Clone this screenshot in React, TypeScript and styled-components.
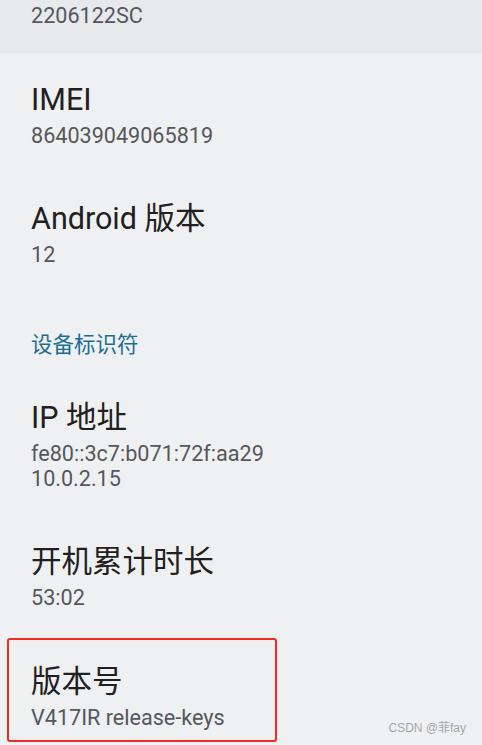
import React from 'react';
import styled, { createGlobalStyle } from 'styled-components';

const GlobalStyle = createGlobalStyle`
  html, body {
    margin: 0;
    padding: 0;
    background: #eff0f2;
  }
`;

const Screen = styled.div`
  position: relative;
  width: 482px;
  height: 745px;
  overflow: hidden;
  background: #eff0f2;
  font-family: Roboto, "Noto Sans CJK SC", sans-serif;
`;

// remainder of the previous (pressed) row, scrolled mostly out of view
const PressedTail = styled.div`
  background: #e8e9eb;
  padding: 3.2px 0 24.8px 31px;
`;

const Item = styled.div`
  position: relative;
  padding: 27px 0 24.5px 31px;
`;

const Title = styled.div`
  font-size: 30.5px;
  line-height: 40px;
  color: #1f2021;
`;

const Summary = styled.div<{ $gap?: number }>`
  margin-top: ${p => (p.$gap ?? 0)}px;
  font-size: 21.6px;
  line-height: 25px;
  color: #54585c;
`;

const SectionHeader = styled.div`
  padding: 40.2px 0 13.8px 31px;
  font-size: 21.5px;
  line-height: 25px;
  color: #1c6e94;
`;

const Highlight = styled.div`
  position: absolute;
  left: 7px;
  top: 3px;
  width: 266px;
  height: 100px;
  border: 2px solid #ee2a22;
  border-radius: 3px;
`;

const Watermark = styled.div`
  position: absolute;
  right: 16px;
  bottom: 10px;
  font-family: "Liberation Sans", "Noto Sans CJK SC", sans-serif;
  font-size: 12px;
  color: #a2a3a5;
  text-shadow: 0 0 1px #ffffff;
`;

interface RowProps {
  title: string;
  lines: string[];
  marked?: boolean;
}

const Row = ({ title, lines, marked }: RowProps) => (
  <Item>
    <Title>{title}</Title>
    {lines.map((l, i) => (
      <Summary key={i} $gap={i === 0 ? 3 : 0}>{l}</Summary>
    ))}
    {marked && <Highlight />}
  </Item>
);

const App = () => {
  return (
    <Screen>
      <GlobalStyle />
      <PressedTail>
        <Summary>2206122SC</Summary>
      </PressedTail>
      <Row title="IMEI" lines={['864039049065819']} />
      <Row title="Android 版本" lines={['12']} />
      <SectionHeader>设备标识符</SectionHeader>
      <Row title="IP 地址" lines={['fe80::3c7:b071:72f:aa29', '10.0.2.15']} />
      <Row title="开机累计时长" lines={['53:02']} />
      <Row title="版本号" lines={['V417IR release-keys']} marked />
      <Watermark>CSDN @菲fay</Watermark>
    </Screen>
  );
};

export default App;
